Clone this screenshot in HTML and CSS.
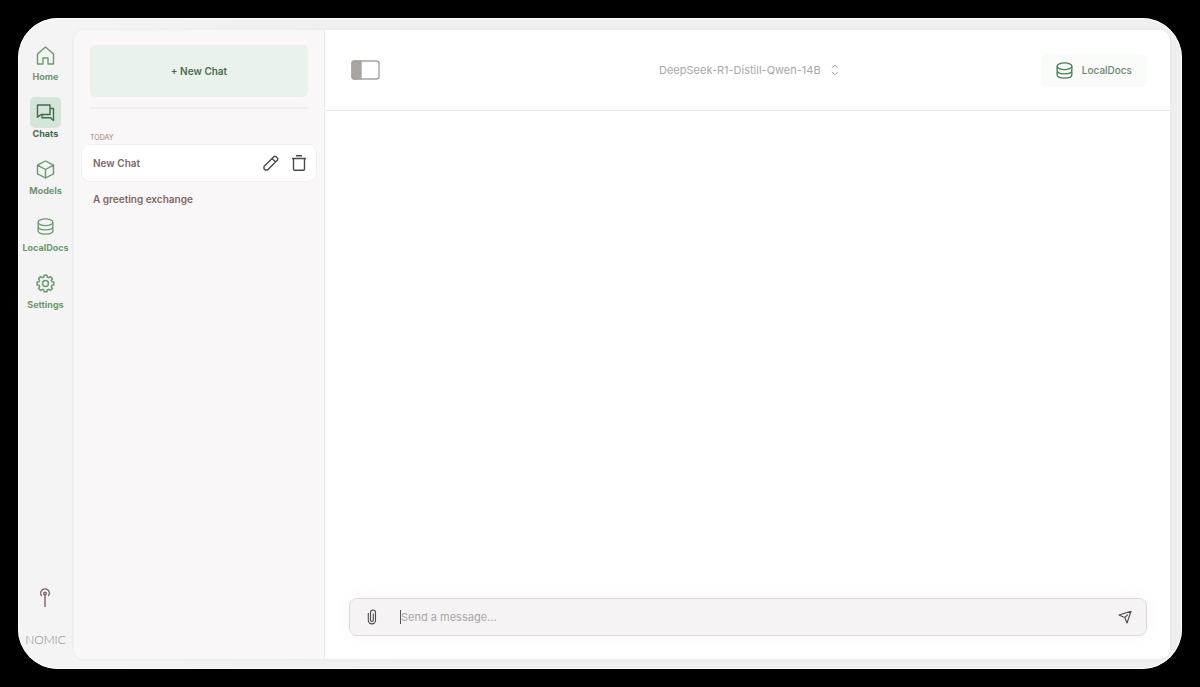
FILE: index.html
```html
<!DOCTYPE html>
<html lang="en">
<head>
  <meta charset="UTF-8">
  <meta name="viewport" content="width=device-width, initial-scale=1.0">
  <title>GPT4All</title>
  <link rel="stylesheet" href="styles.css">
</head>
<body>
  <div class="window">
    <nav class="rail">
      <a class="rail-item" href="#home">
        <span class="rail-icon">
          <svg width="19" height="19" viewBox="0 0 19 19"><path d="M1.500 8 9.500 1 17.500 8v10h-5.500v-6H7v6H1.500z"/></svg>
        </span>
        Home
      </a>
      <a class="rail-item active" href="#chats">
        <span class="rail-icon">
          <svg width="19" height="19" viewBox="0 0 19 19"><path d="M1.500 2h12.500v9.500H5l-3.500 2.800zM14 5.500h3.500v12l-3-2.800H6v-3.200"/></svg>
        </span>
        Chats
      </a>
      <a class="rail-item" href="#models">
        <span class="rail-icon">
          <svg width="19" height="19" viewBox="0 0 19 19"><path d="M9.500 1 17.500 5.200v8.600L9.500 18 1.500 13.800V5.200zM1.500 5.200l8 4.300 8-4.300M9.500 9.500V18"/></svg>
        </span>
        Models
      </a>
      <a class="rail-item" href="#localdocs">
        <span class="rail-icon">
          <svg width="17" height="17" viewBox="0 0 18 18"><ellipse cx="9" cy="4.500" rx="7.800" ry="3.500"/><path d="M1.200 4.500v9c0 4.700 15.600 4.700 15.600 0v-9M1.200 9c0 4.700 15.600 4.700 15.600 0"/></svg>
        </span>
        LocalDocs
      </a>
      <a class="rail-item" href="#settings">
        <span class="rail-icon">
          <svg width="19" height="19" viewBox="0 0 18 18"><path d="M15.100 7.400 16.900 7.600V10.400L15.100 10.600 14.500 12.100 15.600 13.600 13.600 15.600 12.100 14.500 10.600 15.100 10.400 16.900H7.600L7.400 15.100 5.900 14.500 4.400 15.600 2.400 13.600 3.500 12.100 2.900 10.600 1.100 10.400V7.600L2.900 7.400 3.500 5.900 2.400 4.400 4.400 2.400 5.900 3.500 7.400 2.900 7.600 1.100H10.400L10.600 2.900 12.100 3.500 13.600 2.400 15.600 4.400 14.500 5.900z"/><circle cx="9" cy="9" r="2.800"/></svg>
        </span>
        Settings
      </a>
      <div class="brand">
        <svg width="12" height="20" viewBox="0 0 12 20"><path d="M2.700 8a4.300 4.300 0 1 1 6.600 0M6 6v13"/><circle cx="6" cy="5.500" r="1.300"/></svg>
        <span class="brand-name">NOMIC</span>
      </div>
    </nav>

    <div class="panel">
      <aside class="chats">
        <button class="new-chat" type="button">+ New Chat</button>
        <h2 class="section-title">TODAY</h2>
        <div class="chat-row selected">
          <a class="chat-name" href="#chat-1">New Chat</a>
          <button class="icon-button" type="button" aria-label="Rename">
            <svg width="16" height="16" viewBox="0 0 16 16"><path d="M1 11.500 10.800 1.700a1.600 1.600 0 0 1 2.200 0l1.300 1.300a1.600 1.600 0 0 1 0 2.200L4.500 15H2.300L1 13.700zM9 3.500 12.500 7"/></svg>
          </button>
          <button class="icon-button" type="button" aria-label="Delete">
            <svg width="16" height="16" viewBox="0 0 16 16"><path d="M1 3.500h14M5 .8h6M2.500 3.500v10.700q0 1 1 1h9q1 0 1-1V3.500"/></svg>
          </button>
        </div>
        <div class="chat-row">
          <a class="chat-name" href="#chat-2">A greeting exchange</a>
        </div>
      </aside>

      <main class="conversation">
        <header class="toolbar">
          <button class="toggle" type="button" aria-label="Toggle sidebar">
            <svg width="29" height="20" viewBox="0 0 29 20"><rect x="1" y="1" width="27" height="18" rx="2.500"/><path class="fill" d="M1 3q0-2 2-2h7v18H3q-2 0-2-2z"/></svg>
          </button>
          <div class="model">
            <select class="model-select" aria-label="Model">
              <option>DeepSeek-R1-Distill-Qwen-14B</option>
            </select>
            <svg width="8" height="12" viewBox="0 0 8 12"><path d="M1 4.200 4 1.200l3 3M1 7.800l3 3 3-3"/></svg>
          </div>
          <button class="docs-button" type="button">
            <svg width="17" height="17" viewBox="0 0 18 18"><ellipse cx="9" cy="4.500" rx="7.800" ry="3.500"/><path d="M1.200 4.500v9c0 4.700 15.600 4.700 15.600 0v-9M1.200 9c0 4.700 15.600 4.700 15.600 0"/></svg>
            LocalDocs
          </button>
        </header>

        <form class="composer">
          <button class="icon-button" type="button" aria-label="Attach file">
            <svg width="10" height="16" viewBox="0 0 10 16"><path d="M1.300 4v7.300a3.600 3.600 0 0 0 7.200 0V3.500a2.500 2.500 0 0 0-5 0v7.500a1.400 1.400 0 0 0 2.800 0V4.500"/></svg>
          </button>
          <span class="caret"></span>
          <input class="message" type="text" placeholder="Send a message..." aria-label="Message">
          <button class="icon-button" type="submit" aria-label="Send">
            <svg width="14" height="14" viewBox="0 0 14 14"><path d="M1 5 13 1.200 9 13 6.800 7.600zM6.800 7.600l3-3"/></svg>
          </button>
        </form>
      </main>
    </div>
  </div>
</body>
</html>
```
FILE: styles.css
```css
* {
    box-sizing: border-box;
}

body {
    margin: 0;
    padding: 18px;
    height: 100vh;
    background: #000;
    font-family: Inter, "Liberation Sans", sans-serif;
    font-size: 11px;
}

a {
    color: inherit;
    text-decoration: none;
}

button, input, select {
    margin: 0;
    padding: 0;
    border: none;
    outline: none;
    background: none;
    font: inherit;
    color: inherit;
}

svg {
    display: block;
    flex: none;
    fill: none;
    stroke: currentColor;
    stroke-width: 1.4;
    stroke-linejoin: round;
}

.window {
    display: flex;
    height: 100%;
    padding: 12px 12px 10px 0;
    border-radius: 40px;
    overflow: hidden;
    background: linear-gradient(90deg, #f5f4f4 56px, #f0efef 400px);
    box-shadow: inset 0 0 0 1px #fbfbfb;
}

/* left navigation */
.rail {
    display: flex;
    flex-direction: column;
    align-items: center;
    gap: 15px;
    width: 56px;
    padding: 10px 1px 4px 0;
    color: #6c9770;
}

.rail-item {
    display: flex;
    flex-direction: column;
    align-items: center;
    font-size: 9px;
    font-weight: 700;
    line-height: 11px;
}

.rail-icon {
    display: flex;
    align-items: center;
    justify-content: center;
    width: 31px;
    height: 31px;
    border-radius: 5px;
}

.active {
    color: #43684b;
}

.active .rail-icon {
    background: #d5e5d9;
}

.brand {
    display: flex;
    flex-direction: column;
    align-items: center;
    gap: 17px;
    margin-top: auto;
    color: #7e6266;
}

.brand-name {
    color: #957e83;
    font-family: Lato, sans-serif;
    font-size: 12px;
    font-weight: 300;
    line-height: 30px;
}

/* white area with chat list and conversation */
.panel {
    display: flex;
    flex: 1;
    border-radius: 10px;
    overflow: hidden;
    background: #fff;
    box-shadow: 0 0 3px #e4e3e3;
}

.chats {
    width: 251px;
    padding: 15px 8px;
    border-right: 1px solid #ebe8e8;
    background: #f9f7f8;
    color: #7c6765;
}

.new-chat {
    display: block;
    width: calc(100% - 16px);
    height: 52px;
    margin: 0 8px;
    border-radius: 5px;
    background: #eaf3eb;
    color: #4d6b50;
    font-size: 10px;
    font-weight: 600;
}

.section-title {
    margin: 10px 8px 0;
    padding-top: 24px;
    border-top: 2px solid #f0eeee;
    font-size: 7px;
    font-weight: 400;
    line-height: 10px;
    color: #a07f7c;
}

.chat-row {
    display: flex;
    align-items: center;
    gap: 12px;
    height: 36px;
    padding: 0 9px 0 11px;
    border-radius: 8px;
}

.selected {
    margin-top: 2px;
    background: #fff;
    box-shadow: 0 0 0 1px #f2efef;
}

.chat-name {
    flex: 1;
    font-size: 10px;
    font-weight: 600;
}

.icon-button {
    color: #4c484c;
}

.conversation {
    display: flex;
    flex: 1;
    flex-direction: column;
    justify-content: space-between;
}

.toolbar {
    display: grid;
    grid-template-columns: 1fr auto 1fr;
    align-items: center;
    height: 81px;
    padding: 0 23px 0 26px;
    border-bottom: 1px solid #e8e8e8;
}

.toggle {
    justify-self: start;
    color: #aaa4a1;
}

.fill {
    fill: currentColor;
}

.model {
    display: flex;
    align-items: center;
    gap: 10px;
    color: #aaa7a7;
}

.model svg {
    stroke-width: 1;
}

.model-select {
    appearance: none;
}

.docs-button {
    display: flex;
    justify-self: end;
    align-items: center;
    gap: 9px;
    height: 33px;
    padding: 0 15px;
    border-radius: 5px;
    background: #f9fbf9;
    color: #6d8570;
    font-size: 10px;
    font-weight: 500;
}

.docs-button svg {
    color: #4a7f50;
}

.composer {
    display: flex;
    align-items: center;
    height: 38px;
    margin: 0 23px 23px 24px;
    padding: 0 14px 0 17px;
    border: 1px solid #dcdadc;
    border-radius: 8px;
    background: #f5f3f4;
    box-shadow: 0 0 24px #f8f8f8;
}

.composer svg {
    stroke-width: 1.1;
}

.caret {
    width: 1px;
    height: 14px;
    margin-left: 23px;
    background: #555;
}

.message {
    flex: 1;
}

.message::placeholder {
    color: #aaa7a9;
}
```
